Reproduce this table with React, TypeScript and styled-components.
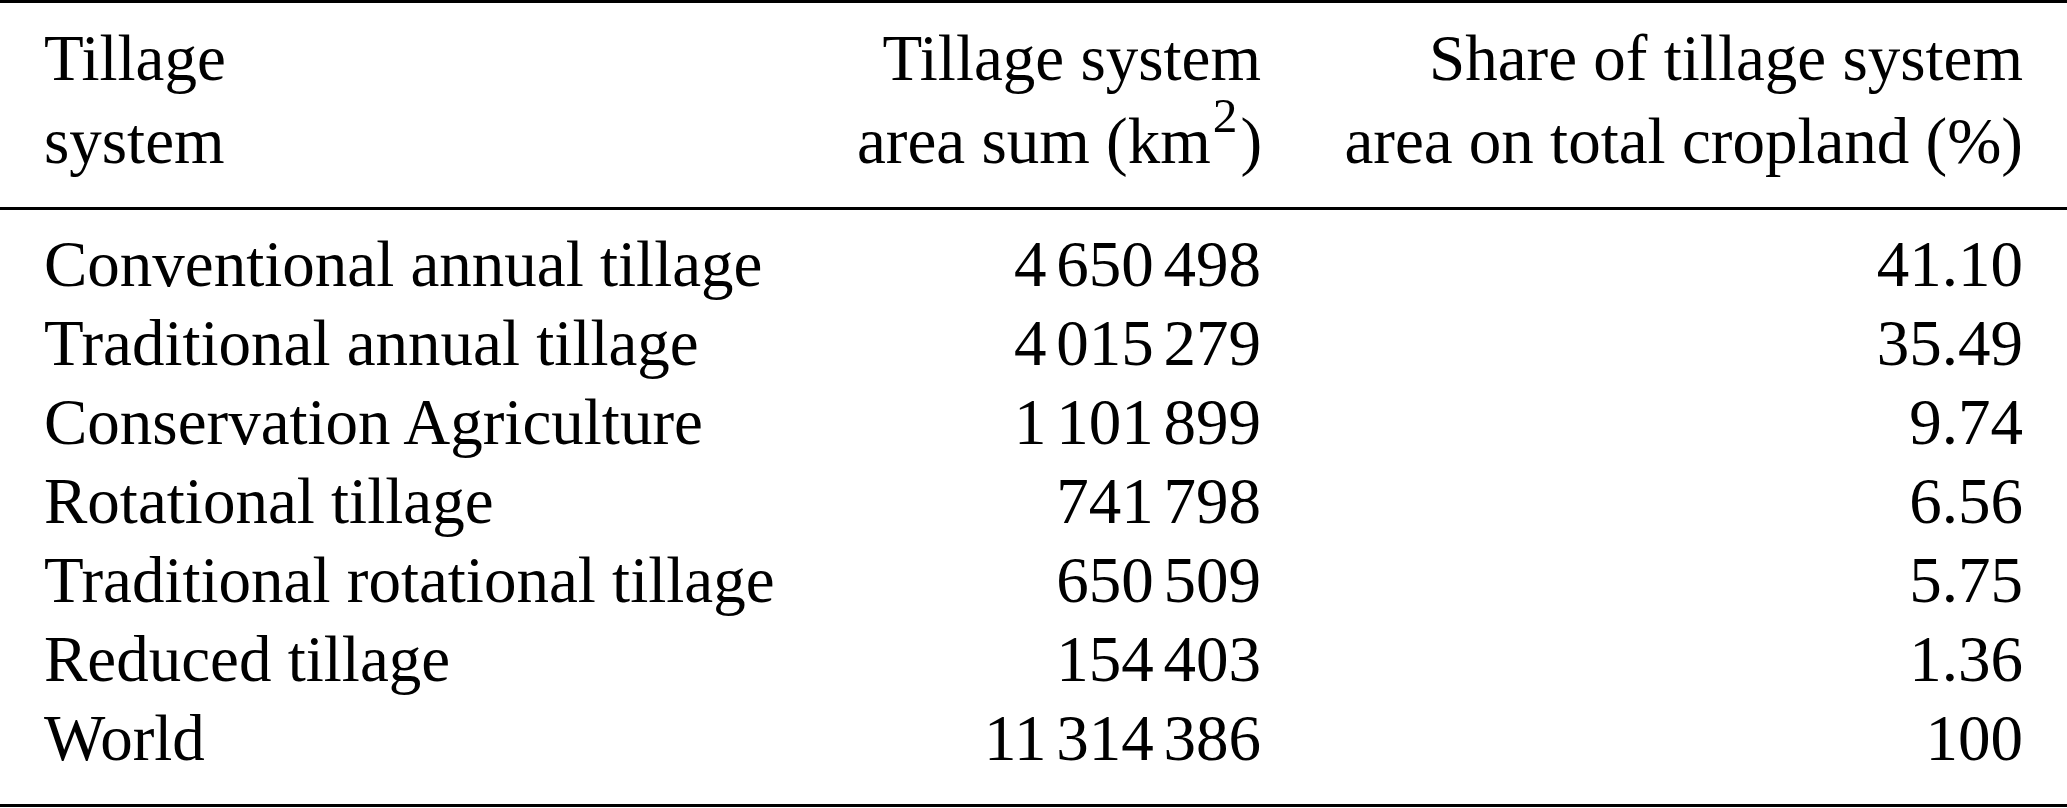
import { Fragment } from "react";
import styled, { createGlobalStyle } from "styled-components";

const GlobalStyle = createGlobalStyle`
  html, body {
    margin: 0;
    padding: 0;
    background: #ffffff;
  }
  body {
    font-family: "Liberation Serif", "Times New Roman", serif;
    color: #000000;
  }
`;

const Table = styled.div`
  width: 2067px;
  box-sizing: border-box;
  border-top: 3px solid #000;
  border-bottom: 3px solid #000;
  font-size: 65px;
`;

const Section = styled.div<{ $head?: boolean }>`
  display: grid;
  grid-template-columns: 1fr 404px 702px;
  column-gap: 60px;
  padding: ${(p) => (p.$head ? "13.6px 44px 24.4px" : "14.6px 44px 26.4px")};
  line-height: ${(p) => (p.$head ? "83px" : "79px")};
  border-bottom: ${(p) => (p.$head ? "3px solid #000" : "none")};
`;

const Cell = styled.div<{ $right?: boolean }>`
  white-space: nowrap;
  text-align: ${(p) => (p.$right ? "right" : "left")};
`;

const Sup = styled.sup`
  font-size: 0.76em;
  line-height: 0;
  vertical-align: 0.62em;
  margin-left: 0.04em;
  margin-right: 0.06em;
`;

const Thin = styled.span`
  display: inline-block;
  width: 0.15em;
`;

const rows: [string, string, string][] = [
  ["Conventional annual tillage", "4 650 498", "41.10"],
  ["Traditional annual tillage", "4 015 279", "35.49"],
  ["Conservation Agriculture", "1 101 899", "9.74"],
  ["Rotational tillage", "741 798", "6.56"],
  ["Traditional rotational tillage", "650 509", "5.75"],
  ["Reduced tillage", "154 403", "1.36"],
  ["World", "11 314 386", "100"],
];

function Grouped({ value }: { value: string }) {
  const parts = value.split(" ");
  return (
    <>
      {parts.map((part, i) => (
        <span key={i}>
          {i > 0 && <Thin />}
          {part}
        </span>
      ))}
    </>
  );
}

export default function App() {
  return (
    <>
      <GlobalStyle />
      <Table>
        <Section $head>
          <Cell>
            Tillage
            <br />
            system
          </Cell>
          <Cell $right>
            Tillage system
            <br />
            area sum (km<Sup>2</Sup>)
          </Cell>
          <Cell $right>
            Share of tillage system
            <br />
            area on total cropland (%)
          </Cell>
        </Section>
        <Section>
          {rows.map(([name, area, share]) => (
            <Fragment key={name}>
              <Cell>{name}</Cell>
              <Cell $right>
                <Grouped value={area} />
              </Cell>
              <Cell $right>{share}</Cell>
            </Fragment>
          ))}
        </Section>
      </Table>
    </>
  );
}
